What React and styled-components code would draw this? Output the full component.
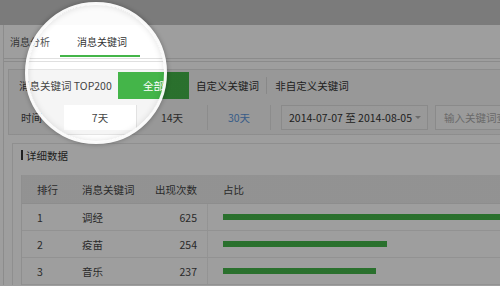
import React from 'react'
import styled, { createGlobalStyle } from 'styled-components'

const Global = createGlobalStyle`
  html, body { margin: 0; padding: 0; background: #fff; overflow: hidden; }
  body { font-family: "Noto Sans CJK SC", "Liberation Sans", sans-serif; }
`

const Stage = styled.div`
  position: relative;
  width: 500px;
  height: 286px;
  overflow: hidden;
  background: #fff;
`

const Page = styled.div`
  width: 660px;
  font-size: 10.5px;
  color: #444;
`

const TopBand = styled.div`
  height: 25px;
  background: #fbfbfb;
`

const Main = styled.div`
  margin-left: 3px;
  border-left: 1px solid #e2e2e2;
  padding-left: 4px;
`

const Tabs = styled.div`
  display: flex;
  height: 33px;
  border-bottom: 4px double #e0e0e0;
  margin-left: -4px;
`

const Tab = styled.div`
  position: relative;
  display: flex;
  align-items: center;
  padding: ${p => (p.$active ? '0 13px 0 21px' : '0 6px')};
  font-size: 10px;
  color: ${p => (p.$active ? '#333' : '#555')};
  ${p => p.$active && `
    &::after {
      content: '';
      position: absolute;
      left: 4px;
      right: 0;
      bottom: 1px;
      height: 2px;
      background: #44b549;
    }
  `}
`

const Panel = styled.div`
  margin-top: 7px;
  border: 1px solid #e4e4e4;
  background: #f5f5f5;
  padding: 1px 0 2px;
`

const FilterRow = styled.div`
  display: flex;
  align-items: stretch;
  height: ${p => p.$h}px;
  margin-top: ${p => p.$gap || 0}px;
`

const Label = styled.div`
  width: ${p => p.$w}px;
  padding-left: ${p => p.$pad}px;
  box-sizing: border-box;
  display: flex;
  align-items: center;
  color: #444;
  flex: none;
  white-space: nowrap;
`

const GreenBtn = styled.div`
  width: 71px;
  margin: 1px 0;
  background: #44b549;
  color: #fff;
  display: flex;
  align-items: center;
  justify-content: center;
  flex: none;
`

const TextBtn = styled.div`
  width: ${p => p.$w}px;
  display: flex;
  align-items: center;
  justify-content: center;
  color: #333;
  flex: none;
  border-right: ${p => (p.$sep ? '1px solid #dcdcdc' : 'none')};
  margin: 6px 0;
`

const DayCell = styled.div`
  width: ${p => p.$w}px;
  margin: 2px 0;
  display: flex;
  align-items: center;
  justify-content: center;
  flex: none;
  background: ${p => (p.$on ? '#fff' : 'transparent')};
  border-right: 1px solid #e2e2e2;
  color: ${p => (p.$link ? '#5a96dc' : '#444')};
`

const DateBox = styled.div`
  width: 147px;
  margin: 2px 0 2px 10px;
  border: 1px solid #dedede;
  background: #f7f7f7;
  display: flex;
  align-items: center;
  justify-content: space-between;
  padding: 0 6px 0 7px;
  box-sizing: border-box;
  color: #333;
  font-size: 10.5px;
  white-space: nowrap;
  flex: none;
`

const Caret = styled.span`
  width: 0;
  height: 0;
  border-left: 3px solid transparent;
  border-right: 3px solid transparent;
  border-top: 3px solid #aaa;
`

const SearchBox = styled.div`
  width: 150px;
  margin: 2px 0 2px 7px;
  border: 1px solid #dedede;
  background: #fafafa;
  display: flex;
  align-items: center;
  padding-left: 8px;
  color: #aaa;
  white-space: nowrap;
  flex: none;
`

const DataBox = styled.div`
  margin-top: 8px;
  margin-left: 4px;
  border-top: 1px solid #e6e6e6;
  border-left: 1px solid #e6e6e6;
  padding: 5px 0 0 8px;
`

const SectionTitle = styled.div`
  display: flex;
  align-items: center;
  gap: 3px;
  height: 12px;
  color: #333;
  &::before {
    content: '';
    width: 2px;
    height: 10px;
    background: #333;
  }
`

const Table = styled.div`
  margin-top: 14px;
  border-left: 1px solid #e6e6e6;
`

const Row = styled.div`
  display: grid;
  grid-template-columns: 50px 70px 65px 1fr;
  height: ${p => (p.$head ? 29 : 27)}px;
  align-items: center;
  background: ${p => (p.$head ? '#ececec' : '#fff')};
  border-bottom: 1px solid ${p => (p.$head ? '#e4e4e4' : '#ebebeb')};
  box-sizing: border-box;
`

const Cell = styled.div`
  padding-left: ${p => p.$pl || 0}px;
  padding-right: ${p => p.$pr || 0}px;
  text-align: ${p => (p.$right ? 'right' : 'left')};
  color: #444;
`

const BarCell = styled.div`
  padding-left: 15px;
  height: 100%;
  display: flex;
  align-items: center;
  color: #444;
  border-left: ${p => (p.$head ? '1px solid transparent' : '1px solid #eee')};
`

const Bar = styled.div`
  height: 6px;
  background: #44b549;
`

const Overlay = styled.div`
  position: absolute;
  inset: 0;
  pointer-events: none;
  background:
    radial-gradient(circle at 96px 73px, transparent 68px, rgba(0, 0, 0, 0.21) 69px) top / 100% 25px no-repeat,
    radial-gradient(circle at 96px 73px, transparent 68px, rgba(0, 0, 0, 0.38) 69px);
`

const Ring = styled.div`
  position: absolute;
  left: 25px;
  top: 2px;
  width: 142px;
  height: 142px;
  box-sizing: border-box;
  border-radius: 50%;
  border: 3px solid rgba(255, 255, 255, 0.95);
  box-shadow: 0 0 4px 1px rgba(0, 0, 0, 0.22), inset 0 0 6px rgba(0, 0, 0, 0.12);
  pointer-events: none;
`

const rows = [
  { rank: 1, word: '调经', count: 625 },
  { rank: 2, word: '疫苗', count: 254 },
  { rank: 3, word: '音乐', count: 237 },
]

export default function App() {
  const max = 625
  return (
    <>
      <Global />
      <Stage>
        <Page>
          <TopBand />
          <Main>
            <Tabs>
              <Tab>消息分析</Tab>
              <Tab $active>消息关键词</Tab>
            </Tabs>

            <Panel>
              <FilterRow $h={29}>
                <Label $w={109} $pad={10}>消息关键词 TOP200</Label>
                <GreenBtn>全部</GreenBtn>
                <TextBtn $w={77} $sep>自定义关键词</TextBtn>
                <TextBtn $w={90}>非自定义关键词</TextBtn>
              </FilterRow>
              <FilterRow $h={29} $gap={3}>
                <Label $w={55} $pad={12}>时间</Label>
                <DayCell $w={72} $on>7天</DayCell>
                <DayCell $w={70}>14天</DayCell>
                <DayCell $w={62} $link>30天</DayCell>
                <DateBox>
                  <span>2014-07-07 至 2014-08-05</span>
                  <Caret />
                </DateBox>
                <SearchBox>输入关键词查询</SearchBox>
              </FilterRow>
            </Panel>

            <DataBox>
              <SectionTitle>详细数据</SectionTitle>
              <Table>
                <Row $head>
                  <Cell $pl={15}>排行</Cell>
                  <Cell $pl={10}>消息关键词</Cell>
                  <Cell $right $pr={10}>出现次数</Cell>
                  <BarCell $head>占比</BarCell>
                </Row>
                {rows.map(r => (
                  <Row key={r.rank}>
                    <Cell $pl={15}>{r.rank}</Cell>
                    <Cell $pl={10}>{r.word}</Cell>
                    <Cell $right $pr={10}>{r.count}</Cell>
                    <BarCell>
                      <Bar style={{ width: Math.round((r.count / max) * 403) }} />
                    </BarCell>
                  </Row>
                ))}
              </Table>
            </DataBox>
          </Main>
        </Page>
        <Overlay />
        <Ring />
      </Stage>
    </>
  )
}
